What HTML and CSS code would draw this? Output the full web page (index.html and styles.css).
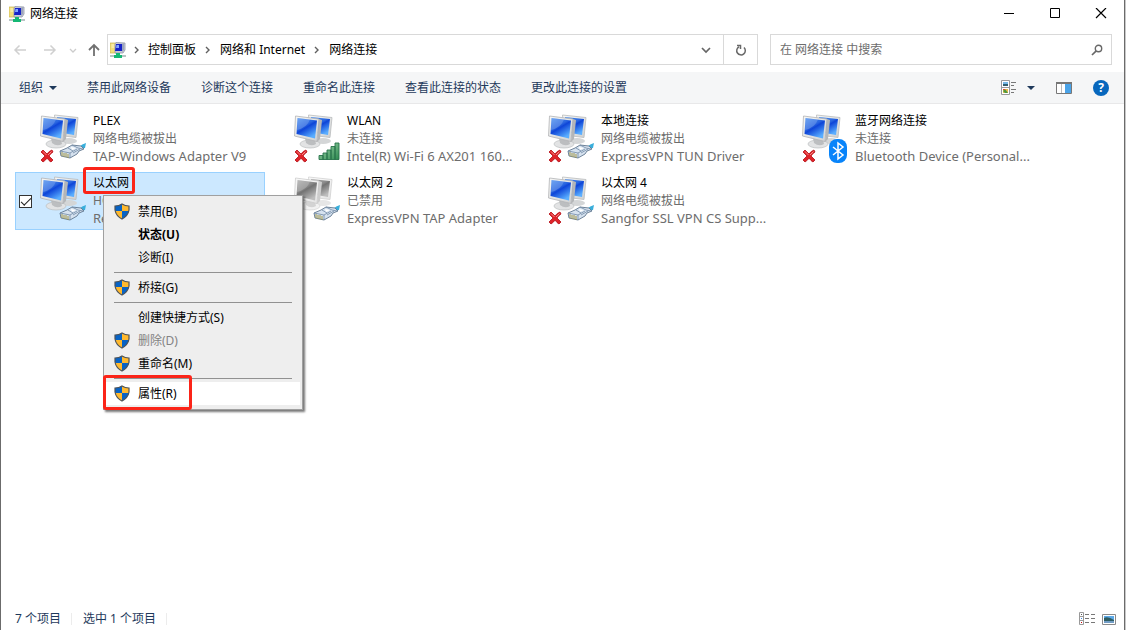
FILE: index.html
```html
<!DOCTYPE html>
<html lang="zh-CN">
<head>
<meta charset="utf-8">
<meta name="viewport" content="width=device-width, initial-scale=1">
<title>网络连接</title>
<link rel="stylesheet" href="styles.css">
</head>
<body>
<svg class="sprite" aria-hidden="true">
  <defs>
    <linearGradient id="screen" x1="0" y1="0" x2=".6" y2="1">
      <stop offset="0" stop-color="#4f93f0"/><stop offset=".45" stop-color="#2a66e0"/><stop offset=".55" stop-color="#0e45d8"/><stop offset="1" stop-color="#5aaeff"/>
    </linearGradient>
    <linearGradient id="metal" x1="0" y1="0" x2="1" y2="1">
      <stop offset="0" stop-color="#f8f8f6"/><stop offset="1" stop-color="#cfd1d2"/>
    </linearGradient>
    <linearGradient id="signal" x1="0" y1="0" x2="1" y2="1">
      <stop offset="0" stop-color="#a5d9ae"/><stop offset="1" stop-color="#2d8a50"/>
    </linearGradient>
    <clipPath id="shield-shape"><path d="M8 1Q11 3 15 3V7Q14 13 8 16Q2 13 1 7V3Q5 3 8 1Z"/></clipPath>
  </defs>
  <symbol id="computers" viewBox="0 0 48 50">
    <ellipse cx="29" cy="27" rx="8" ry="3" fill="#d4d6d7"/>
    <path d="M14.500 1L38 3.500l-2 20L16 21z" fill="url(#metal)" stroke="#b9bbbd" stroke-width=".8"/>
    <path d="M17 3l19 2-2 16-17-3z" fill="url(#screen)"/>
    <ellipse cx="16" cy="30" rx="10" ry="4" fill="#e2e3e4" stroke="#bcbec0" stroke-width=".7"/>
    <path d="M11 24l10 2 1 4q-5 3-10-1z" fill="#bcbec0"/>
    <path d="M25 5l3 1-2 19-3 3z" fill="#b4b6b8"/>
    <path d="M1.500 2L25 5l-2 22.500L.500 22z" fill="url(#metal)" stroke="#b2b4b6" stroke-width=".8"/>
    <path d="M3.500 4L23 6.500l-2 18L2.500 20z" fill="url(#screen)"/>
    <path d="M3.500 4L16 5.600Q13 14 3 16z" fill="#fff" opacity=".18"/>
  </symbol>
  <symbol id="plug" viewBox="0 0 28 18">
    <path d="M20 5q3-3 7-4l-1 5q-3 0-5 2z" fill="#39aedb"/>
    <path d="M1 9l7-3 5-3 9 1 3 3-5 2-2 3-7 4-9-2z" fill="#d6e2ef" stroke="#61778f" stroke-width=".9"/>
    <path d="M1 9l10 2 7-4M11 11v5M14 11l7-4M14 9l-5-3M13 3l6 3 5 1" fill="none" stroke="#7089a4" stroke-width=".8"/>
    <path d="M3 10v4M5 11v4M7 11v4M9 12v4" stroke="#a2984b" stroke-width="1"/>
    <path d="M12 5l5 1-4 2z" fill="#fff"/>
  </symbol>
  <symbol id="cross" viewBox="0 0 14 14">
    <path d="M1 3l2-2q2 2 4 4 2-3 5-4l1 2Q10 5 9 7q2 2 4 4l-2 2q-2-1-4-4-1 2-4 4l-2-2q2-2 4-4Q3 5 1 3z" fill="#df2329" stroke="#b50f17" stroke-width=".8"/>
    <path d="M3 2.500l3.500 3.500M11.500 2.500L8 6" stroke="#f48b88" stroke-width="1"/>
  </symbol>
  <symbol id="bars" viewBox="0 0 22 18">
    <g fill="url(#signal)" stroke="#27734a" stroke-width=".9"><path d="M1 13.500h4v4H1zM5 11h4v6.500H5zM9 8h4v9.500H9zM13 4.500h4v13h-4zM17 1h4v16.500h-4z"/></g>
  </symbol>
  <symbol id="bluetooth" viewBox="0 0 18 24">
    <rect width="18" height="24" rx="8" fill="#0884fa"/>
    <path d="M4 8l10 8-5 4V4l5 4-10 8" fill="none" stroke="#fff" stroke-width="1.500"/>
  </symbol>
  <symbol id="shield" viewBox="0 0 16 17">
    <g clip-path="url(#shield-shape)"><path d="M0 0h8v8H0z" fill="#0863c5"/><path d="M8 0h8v8H8z" fill="#ffb92e"/><path d="M0 8h8v9H0z" fill="#ffb92e"/><path d="M8 8h8v9H8z" fill="#0863c5"/></g>
    <path d="M8 1Q11 3 15 3V7Q14 13 8 16Q2 13 1 7V3Q5 3 8 1Z" fill="none" stroke="#4e5357" stroke-width="1.200"/>
  </symbol>
  <symbol id="network" viewBox="0 0 16 16">
    <path d="M0 1h6v10H0z" fill="#f2df7b" stroke="#c7b34d" stroke-width=".7"/><path d="M1.500 3h3M1.500 5h3" stroke="#fff9ce"/>
    <path d="M6 .5l9 .5v7l-2 3H5V2z" fill="#c9ccd8" stroke="#9096a5" stroke-width=".8"/>
    <path d="M6 2l6 0v7H5z" fill="#1723c8"/><path d="M6.500 3L9 3v3H6z" fill="#81a5ff"/><path d="M12 2l2-1v7l-2 2z" fill="#9ba4bd"/>
    <path d="M0 13h16v2H0z" fill="#b8c4c4"/><path d="M6 11h4v2h2v3H4v-3h2z" fill="#15b874"/>
  </symbol>
  <symbol id="chevron" viewBox="0 0 6 8"><path d="M1 1l3 3-3 3" fill="none" stroke="#606060" stroke-width="1.400"/></symbol>
</svg>

<div class="window">
  <header class="titlebar">
    <svg class="i16"><use href="#network"/></svg>
    <h1>网络连接</h1>
    <div class="controls">
      <button aria-label="最小化"><svg viewBox="0 0 12 12"><path d="M1 5.500h10" stroke="#000"/></svg></button>
      <button aria-label="最大化"><svg viewBox="0 0 12 12"><path d="M1.500.500h9v9h-9z" fill="none" stroke="#000"/></svg></button>
      <button aria-label="关闭"><svg viewBox="0 0 12 12"><path d="M1 0l10 10M11 0L1 10" stroke="#000" stroke-width="1.200"/></svg></button>
    </div>
  </header>

  <div class="navrow">
    <nav class="history" aria-label="导航">
      <button disabled aria-label="后退"><svg class="i14" viewBox="0 0 14 14"><path d="M13 7H2M6.500 2.500L2 7l4.500 4.500" fill="none" stroke="#d0d0d0" stroke-width="1.500"/></svg></button>
      <button disabled aria-label="前进"><svg class="i14" viewBox="0 0 14 14"><path d="M1 7h11M7.500 2.500L12 7l-4.500 4.500" fill="none" stroke="#d0d0d0" stroke-width="1.500"/></svg></button>
      <button class="recent" disabled aria-label="最近位置"><svg class="i8" viewBox="0 0 8 8"><path d="M1 3l3 3 3-3" fill="none" stroke="#ccc" stroke-width="1.300"/></svg></button>
      <button class="up" aria-label="向上"><svg class="i14" viewBox="0 0 14 14"><path d="M7 13V2M2 7l5-5 5 5" fill="none" stroke="#707070" stroke-width="1.800"/></svg></button>
    </nav>
    <div class="address">
      <svg class="i16"><use href="#network"/></svg>
      <svg class="sep"><use href="#chevron"/></svg><a href="#">控制面板</a>
      <svg class="sep"><use href="#chevron"/></svg><a href="#">网络和 Internet</a>
      <svg class="sep"><use href="#chevron"/></svg><a href="#">网络连接</a>
      <button class="drop" aria-label="以前的位置"><svg class="i10" viewBox="0 0 10 10"><path d="M1 3l4 4 4-4" fill="none" stroke="#666" stroke-width="1.700"/></svg></button>
      <button class="refresh" aria-label="刷新"><svg class="i12" viewBox="0 0 12 12"><path d="M9 3.500A4.300 4.300 0 1 1 4 2.800M2 1.500h3.500V5" fill="none" stroke="#686868" stroke-width="1.500"/></svg></button>
    </div>
    <form class="search">
      <input type="text" placeholder="在 网络连接 中搜索" aria-label="搜索">
      <svg class="i12" viewBox="0 0 12 12"><circle cx="7.500" cy="4.500" r="3.200" fill="none" stroke="#686868" stroke-width="1.400"/><path d="M5.200 6.800L1 11" stroke="#686868" stroke-width="1.700"/></svg>
    </form>
  </div>

  <div class="toolbar">
    <button class="organize">组织 <span class="caret"></span></button>
    <button>禁用此网络设备</button>
    <button>诊断这个连接</button>
    <button>重命名此连接</button>
    <button>查看此连接的状态</button>
    <button>更改此连接的设置</button>
    <div class="tools">
      <button aria-label="更改视图" class="view"><svg class="i16" viewBox="0 0 16 16"><path d="M.5.5h8v14h-8zM.5 7.500h8" fill="#fff" stroke="#999"/><path d="M2 2h5v2H2z" fill="#77b8e6"/><path d="M2 4h5v2H2z" fill="#315f70"/><path d="M2 9h5v4H2z" fill="#e8bd4b"/><path d="M2 11l2-2 3 4H4z" fill="#4d9841"/><path d="M2 9h2v1H2z" fill="#d54b32"/><path d="M10 2.500h5M10 5.500h3M10 9.500h5M10 12.500h3" stroke="#777"/></svg><span class="caret"></span></button>
      <button aria-label="预览窗格"><svg class="i16" viewBox="0 0 16 16"><path d="M.5 2.500h15v11H.5z" fill="#fff" stroke="#777"/><path d="M0 2h16v2H0z" fill="#777"/><path d="M5.500 4v9" stroke="#bbb"/><path d="M9 4h6v9H9z" fill="#4aa3e8"/></svg></button>
      <button aria-label="帮助" class="help"><span>?</span></button>
    </div>
  </div>

  <main class="tiles">
    <article class="tile"><div class="pic"><svg class="pc"><use href="#computers"/></svg><svg class="x"><use href="#cross"/></svg><svg class="plug"><use href="#plug"/></svg></div><div class="info"><h2>PLEX</h2><p>网络电缆被拔出</p><p class="device">TAP-Windows Adapter V9</p></div></article>
    <article class="tile"><div class="pic"><svg class="pc"><use href="#computers"/></svg><svg class="x"><use href="#cross"/></svg><svg class="bars"><use href="#bars"/></svg></div><div class="info"><h2>WLAN</h2><p>未连接</p><p class="device">Intel(R) Wi-Fi 6 AX201 160...</p></div></article>
    <article class="tile"><div class="pic"><svg class="pc"><use href="#computers"/></svg><svg class="x"><use href="#cross"/></svg><svg class="plug"><use href="#plug"/></svg></div><div class="info"><h2>本地连接</h2><p>网络电缆被拔出</p><p class="device">ExpressVPN TUN Driver</p></div></article>
    <article class="tile"><div class="pic"><svg class="pc"><use href="#computers"/></svg><svg class="x"><use href="#cross"/></svg><svg class="bt"><use href="#bluetooth"/></svg></div><div class="info"><h2>蓝牙网络连接</h2><p>未连接</p><p class="device">Bluetooth Device (Personal...</p></div></article>
    <article class="tile selected"><input type="checkbox" checked aria-label="选择 以太网"><div class="pic"><svg class="pc"><use href="#computers"/></svg><svg class="plug"><use href="#plug"/></svg></div><div class="info"><h2>以太网</h2><p>HC</p><p class="device">Re</p></div>
      <div class="mark mark-name"></div>
      <div class="menu" role="menu">
        <button role="menuitem"><svg><use href="#shield"/></svg>禁用(B)</button>
        <button role="menuitem" class="bold">状态(U)</button>
        <button role="menuitem">诊断(I)</button>
        <hr>
        <button role="menuitem"><svg><use href="#shield"/></svg>桥接(G)</button>
        <hr>
        <button role="menuitem">创建快捷方式(S)</button>
        <button role="menuitem" disabled><svg><use href="#shield"/></svg>删除(D)</button>
        <button role="menuitem"><svg><use href="#shield"/></svg>重命名(M)</button>
        <hr>
        <button role="menuitem" class="current"><svg><use href="#shield"/></svg>属性(R)</button>
        <div class="mark mark-item"></div>
      </div>
    </article>
    <article class="tile"><div class="pic"><svg class="pc off"><use href="#computers"/></svg><svg class="plug"><use href="#plug"/></svg></div><div class="info"><h2>以太网 2</h2><p>已禁用</p><p class="device">ExpressVPN TAP Adapter</p></div></article>
    <article class="tile"><div class="pic"><svg class="pc"><use href="#computers"/></svg><svg class="x"><use href="#cross"/></svg><svg class="plug"><use href="#plug"/></svg></div><div class="info"><h2>以太网 4</h2><p>网络电缆被拔出</p><p class="device">Sangfor SSL VPN CS Supp...</p></div></article>
  </main>

  <footer class="status">
    <span>7 个项目</span><span>选中 1 个项目</span>
    <div class="modes">
      <button aria-label="详细信息"><svg class="i16" viewBox="0 0 16 14"><path d="M.5.5h4v12h-4zM.5 4.500h4M.5 8.500h4" fill="#fff" stroke="#999"/><path d="M6 2.500h4M12 2.500h4M6 6.500h4M12 6.500h4M6 10.500h4M12 10.500h4" stroke="#777"/><path d="M2 2h1v1H2z" fill="#555"/><path d="M2 6h1v1H2z" fill="#3788e7"/><path d="M2 10h1v1H2z" fill="#c00"/></svg></button>
      <button aria-label="大图标"><svg class="i14" viewBox="0 0 14 11"><path d="M.5.5h13v10H.5z" fill="#fff" stroke="#8a8a8a"/><path d="M2 2h10v4H2z" fill="#5ca9e8"/><path d="M2 4q4-2 10 2v3H2z" fill="#2e5d62"/><path d="M2 7h10v2H2z" fill="#719cc5"/></svg></button>
    </div>
  </footer>
</div>
</body>
</html>
```

FILE: styles.css
```css
* { box-sizing: border-box; }
body {
  margin: 0;
  background: #c8c8c8;
  font: 12px/18px "Noto Sans", "Noto Sans CJK SC", sans-serif;
  color: #000;
}
button, input { font: inherit; color: inherit; }
button { display: flex; align-items: center; padding: 0; border: 0; background: none; white-space: nowrap; }
h1, h2, p { margin: 0; font-size: 12px; font-weight: 400; }
svg { display: block; flex: none; }
.sprite { position: absolute; width: 0; height: 0; }
.i8 { width: 8px; height: 8px; }
.i10 { width: 10px; height: 10px; }
.i12 { width: 12px; height: 12px; }
.i14 { width: 14px; height: 14px; }
.i16 { width: 16px; height: 16px; }

.window {
  display: flex;
  flex-direction: column;
  min-height: 100vh;
  margin-right: 1px;
  border: solid #6b6b6b;
  border-width: 0 1px;
  background: #fff;
}

.titlebar { display: flex; align-items: center; gap: 5px; height: 27px; padding-left: 8px; }
.controls { display: flex; margin-left: auto; }
.controls button { justify-content: center; width: 46px; height: 27px; }
.controls svg { width: 12px; height: 12px; }

.navrow { display: flex; padding: 7px 12px 7px 0; }
.history { display: flex; align-items: center; width: 106px; padding-left: 12px; gap: 16px; }
.history .recent { margin: 0 -4px; }
.history .up { margin-left: -2px; }
.address, .search { display: flex; align-items: center; height: 31px; border: 1px solid #d9d9d9; }
.address { flex: 647 1 0; padding-left: 2px; }
.address a { color: #000; text-decoration: none; white-space: nowrap; }
.sep { width: 6px; height: 8px; margin: 0 9px; }
.sep:nth-of-type(2) { margin: 0 8px; }
.drop { justify-content: center; width: 34px; height: 29px; margin-left: auto; }
.refresh { justify-content: center; width: 34px; height: 29px; border-left: 1px solid #d9d9d9; }
.search { flex: 323 1 0; margin-left: 12px; padding: 0 8px 0 9px; }
.search input { flex: 1; min-width: 0; padding: 0; border: 0; outline: 0; background: none; }
.search input::placeholder { color: #6d6d6d; opacity: 1; }

.toolbar {
  display: flex;
  align-items: center;
  gap: 30px;
  height: 32px;
  padding: 0 15px 0 18px;
  background: #f5f6f7;
  border-bottom: 1px solid #e8e8e9;
  color: #1e395b;
}
.organize { gap: 6px; }
.caret { border: solid transparent; border-width: 4px 4px 0; border-top-color: #1e395b; }
.tools { display: flex; align-items: center; gap: 21px; margin-left: auto; }
.view { gap: 10px; }
.help span {
  width: 16px;
  height: 16px;
  border-radius: 50%;
  background: #0767bd;
  color: #fff;
  font-weight: 700;
  line-height: 16px;
}

.tiles {
  display: grid;
  grid-template-columns: repeat(auto-fill, 250px);
  grid-auto-rows: 58px;
  align-content: start;
  gap: 4px;
  flex: 1;
  padding: 6px 14px;
}
.tile { position: relative; display: flex; padding-left: 24px; border: 1px solid transparent; }
.tile.selected { padding-left: 3px; background: #cce8ff; border-color: #99d1ff; }
.tile input {
  appearance: none;
  flex: none;
  align-self: center;
  display: grid;
  place-items: center;
  width: 13px;
  height: 13px;
  margin: 0 8px 0 0;
  border: 1px solid #333;
  background: #fff;
}
.tile input:checked::after {
  content: "";
  width: 9px;
  height: 4px;
  border: solid #222;
  border-width: 0 0 1px 1px;
  transform: translateY(-1px) rotate(-45deg);
}
.pic { position: relative; flex: none; width: 48px; height: 56px; }
.pic svg { position: absolute; }
.pic .pc { left: 0; top: 3px; width: 48px; height: 50px; }
.pic .off { filter: grayscale(1) brightness(1.1) contrast(.6) brightness(1.2); }
.pic .x { left: 0; top: 38px; width: 14px; height: 14px; }
.pic .plug { right: 1px; bottom: 7px; width: 28px; height: 18px; }
.pic .bars { right: 2px; bottom: 7px; width: 22px; height: 18px; }
.pic .bt { right: 3px; bottom: 4px; width: 18px; height: 24px; }
.info { margin-left: 5px; padding-top: 1px; white-space: nowrap; }
.info p { color: #6d6d6d; }
.info .device { font-size: 13px; line-height: 16px; }

.menu {
  position: absolute;
  z-index: 2;
  left: 87px;
  top: 22px;
  width: 200px;
  padding: 4px 2px;
  border: 1px solid #a0a0a0;
  background: #eee;
  box-shadow: 2px 2px 2px #0008;
}
.menu button { position: relative; width: 100%; height: 23px; padding-left: 32px; }
.menu svg { width: 16px; height: 17px; margin-left: -24px; margin-right: 8px; }
.menu .bold { font-weight: 700; }
.menu button:disabled { color: #838383; }
.menu .current { background: #fff; }
.menu hr { height: 1px; margin: 3px 8px; border: 0; background: #919191; }
.mark { position: absolute; z-index: 3; border: 3px solid #fb2418; border-radius: 3px; pointer-events: none; }
.mark-name { left: 67px; top: -6px; width: 52px; height: 27px; }
.mark-item { left: -1px; bottom: -1px; width: 89px; height: 35px; }

.status { display: flex; align-items: center; height: 22px; padding: 0 8px 0 14px; color: #1e395b; }
.status span { padding-right: 10px; margin-right: 11px; border-right: 1px solid #ececec; line-height: 12px; }
.modes { display: flex; align-items: center; gap: 7px; margin-left: auto; }
.modes .i16 { height: 14px; }
.modes .i14 { height: 11px; }
```
